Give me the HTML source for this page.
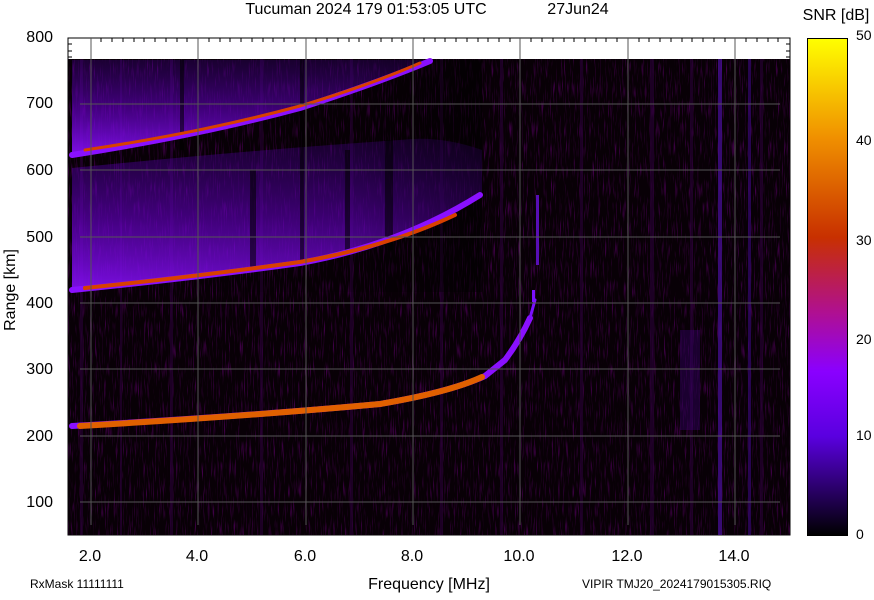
<!DOCTYPE html>
<html><head><style>
body{margin:0;background:#fff;width:874px;height:595px;overflow:hidden;font-family:"Liberation Sans",sans-serif}
</style></head><body>
<svg width="874" height="595" xmlns="http://www.w3.org/2000/svg" font-family="Liberation Sans, sans-serif">
<defs>
<linearGradient id="cb" x1="0" y1="1" x2="0" y2="0">
<stop offset="0" stop-color="#000"/>
<stop offset="0.2" stop-color="#5a00e0"/>
<stop offset="0.33" stop-color="#8a00ff"/>
<stop offset="0.45" stop-color="#b01090"/>
<stop offset="0.6" stop-color="#c83000"/>
<stop offset="0.8" stop-color="#f09000"/>
<stop offset="1" stop-color="#ffff00"/>
</linearGradient>
<linearGradient id="fade" x1="0" y1="1" x2="0" y2="0">
<stop offset="0" stop-color="#8a10ff" stop-opacity="0.9"/>
<stop offset="0.5" stop-color="#6a00d0" stop-opacity="0.6"/>
<stop offset="1" stop-color="#4a00a0" stop-opacity="0.3"/>
</linearGradient>
<linearGradient id="fadeH" x1="0" y1="0" x2="1" y2="0">
<stop offset="0" stop-color="#000" stop-opacity="0"/>
<stop offset="0.7" stop-color="#000" stop-opacity="0.15"/>
<stop offset="1" stop-color="#000" stop-opacity="0.5"/>
</linearGradient>
<filter id="nz" x="0" y="0" width="100%" height="100%">
<feTurbulence type="fractalNoise" baseFrequency="0.9 0.05" numOctaves="2" seed="3"/>
<feColorMatrix values="0 0 0 0 0.22  0 0 0 0 0  0 0 0 0 0.3  0 0 0 1.8 -1.0"/>
</filter>
</defs>
<text x="366" y="14" font-size="16" text-anchor="middle">Tucuman 2024 179 01:53:05 UTC</text>
<text x="578" y="14" font-size="16" text-anchor="middle">27Jun24</text>
<text x="836" y="20" font-size="16" text-anchor="middle">SNR [dB]</text>
<rect x="68" y="38" width="722" height="497" fill="#fff" stroke="#000"/>
<rect x="68" y="59" width="722" height="476" fill="#080006"/>
<rect x="68" y="59" width="722" height="476" filter="url(#nz)"/>
<g fill="#2a0038" opacity="0.6">
<rect x="80" y="59" width="3" height="476"/><rect x="120" y="59" width="2" height="476"/><rect x="170" y="59" width="3" height="476"/><rect x="260" y="59" width="3" height="476"/><rect x="350" y="59" width="3" height="476"/><rect x="440" y="59" width="3" height="476"/><rect x="500" y="59" width="3" height="476"/><rect x="580" y="59" width="3" height="476"/><rect x="650" y="59" width="4" height="476"/><rect x="690" y="59" width="3" height="476"/><rect x="760" y="59" width="3" height="476"/>
</g>
<rect x="718" y="59" width="4" height="476" fill="#4a10a0" opacity="0.7"/>
<rect x="748" y="59" width="3" height="476" fill="#3a0880" opacity="0.6"/>
<rect x="680" y="330" width="20" height="100" fill="#3a0070" opacity="0.4"/>
<path d="M72 292 Q200 278 300 264 Q400 245 482 195 L482 150 Q440 135 400 140 Q250 150 72 168 Z" fill="url(#fade)"/>
<path d="M72 155 Q200 135 300 108 Q380 82 430 60 L72 60 Z" fill="url(#fade)"/>
<path d="M72 60 H482 V292 H72 Z" fill="url(#fadeH)"/>
<g fill="#000" opacity="0.55">
<rect x="250" y="170" width="6" height="100"/><rect x="300" y="60" width="4" height="200"/><rect x="345" y="150" width="5" height="105"/><rect x="385" y="140" width="8" height="110"/><rect x="180" y="60" width="4" height="90"/>
</g>
<g fill="none" stroke-linecap="round">
<path d="M72 155 Q200 135 300 108 Q380 82 430 61" stroke="#8a10ff" stroke-width="6"/>
<path d="M85 150 Q200 133 300 106 Q370 85 420 63" stroke="#d84000" stroke-width="3"/>
<path d="M72 290 Q200 277 300 263 Q400 245 480 195" stroke="#8a10ff" stroke-width="6"/>
<path d="M85 288 Q200 276 300 262 Q390 246 455 215" stroke="#d84000" stroke-width="4"/>
<path d="M72 426 Q250 416 380 404 Q450 392 485 376 L505 360 Q520 340 530 318" stroke="#8a10ff" stroke-width="6"/>
<path d="M80 426 Q250 416 380 404 Q450 392 482 377" stroke="#e06000" stroke-width="6"/>
<path d="M530 318 L535 300" stroke="#7a10ff" stroke-width="3"/>
</g>
<rect x="532" y="290" width="3" height="12" fill="#7a10ff"/>
<rect x="536" y="195" width="3" height="70" fill="#6a10e0" opacity="0.8"/>
<g stroke="#555" stroke-width="1">
<line x1="80" y1="104" x2="780" y2="104"/><line x1="80" y1="170" x2="780" y2="170"/><line x1="80" y1="237" x2="780" y2="237"/><line x1="80" y1="303" x2="780" y2="303"/><line x1="80" y1="369" x2="780" y2="369"/><line x1="80" y1="436" x2="780" y2="436"/><line x1="80" y1="502" x2="780" y2="502"/>
<line x1="91" y1="38" x2="91" y2="525"/><line x1="198" y1="38" x2="198" y2="525"/><line x1="306" y1="38" x2="306" y2="525"/><line x1="413" y1="38" x2="413" y2="525"/><line x1="520" y1="38" x2="520" y2="525"/><line x1="628" y1="38" x2="628" y2="525"/><line x1="735" y1="38" x2="735" y2="525"/>
</g>
<g stroke="#000">
<path d="M101 38v4M112 38v4M123 38v4M134 38v4M144 38v4M155 38v4M166 38v4M177 38v4M187 38v4M209 38v4M220 38v4M230 38v4M241 38v4M252 38v4M263 38v4M273 38v4M284 38v4M295 38v4M316 38v4M327 38v4M338 38v4M349 38v4M359 38v4M370 38v4M381 38v4M392 38v4M402 38v4M424 38v4M435 38v4M445 38v4M456 38v4M467 38v4M478 38v4M488 38v4M499 38v4M510 38v4M531 38v4M542 38v4M553 38v4M564 38v4M574 38v4M585 38v4M596 38v4M606 38v4M617 38v4M639 38v4M649 38v4M660 38v4M671 38v4M682 38v4M692 38v4M703 38v4M714 38v4M725 38v4M746 38v4M757 38v4M768 38v4M778 38v4"/>
<path d="M68 44h4M68 51h4M68 57h4M786 44h4M786 51h4M786 57h4"/>
</g>
<g font-size="16" text-anchor="end">
<text x="53" y="42">800</text><text x="53" y="108">700</text><text x="53" y="175">600</text><text x="53" y="242">500</text><text x="53" y="308">400</text><text x="53" y="374">300</text><text x="53" y="441">200</text><text x="53" y="507">100</text>
</g>
<g font-size="16" text-anchor="middle">
<text x="90" y="561">2.0</text><text x="197" y="561">4.0</text><text x="305" y="561">6.0</text><text x="412" y="561">8.0</text><text x="519" y="561">10.0</text><text x="627" y="561">12.0</text><text x="734" y="561">14.0</text>
</g>
<text x="429" y="589" font-size="16" text-anchor="middle">Frequency [MHz]</text>
<text x="15" y="290" font-size="16" text-anchor="middle" transform="rotate(-90 15 290)">Range [km]</text>
<text x="30" y="588" font-size="12">RxMask 11111111</text>
<text x="582" y="588" font-size="12">VIPIR  TMJ20_2024179015305.RIQ</text>
<rect x="807.5" y="38.5" width="40" height="497" fill="url(#cb)" stroke="#000"/>
<g font-size="14">
<text x="856" y="40">50</text><text x="856" y="145">40</text><text x="856" y="245">30</text><text x="856" y="344">20</text><text x="856" y="440">10</text><text x="856" y="539">0</text>
</g>
</svg>
</body></html>
